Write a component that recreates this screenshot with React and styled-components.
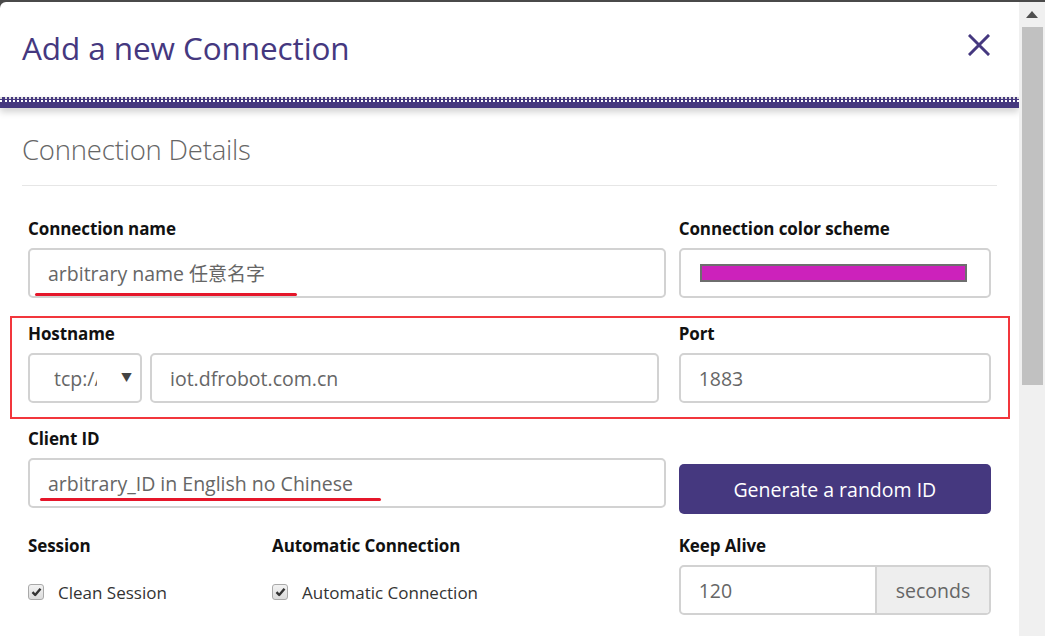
import React from "react";
import styled, { createGlobalStyle } from "styled-components";

const PURPLE = "#45387f";

const Global = createGlobalStyle`
  html, body { margin: 0; padding: 0; }
  body {
    background: #4a4a4a;
    font-family: "Open Sans", "Noto Sans", "Noto Sans CJK SC", sans-serif;
    overflow: hidden;
  }
`;

const Page = styled.div`
  position: relative;
  display: flex;
  height: 634px;
  margin-top: 2px;
  overflow: hidden;
`;

const Modal = styled.div`
  flex: 1;
  background: #fff;
  border-top-left-radius: 6px;
  overflow: hidden;
`;

const Header = styled.div`
  height: 95px;
  display: flex;
  align-items: center;
  justify-content: space-between;
  padding: 0 29px 0 22px;
`;

const Title = styled.h1`
  margin: -4px 0 0;
  font-size: 31.5px;
  font-weight: 400;
  color: ${PURPLE};
  letter-spacing: -0.1px;
`;

const Close = styled.button`
  border: 0;
  background: none;
  padding: 0;
  width: 22px;
  height: 22px;
  margin-top: -10px;
  display: flex;
  cursor: pointer;
`;

const HeaderRule = styled.div`
  position: relative;
  border-top: 2px dotted #dcdcdc;
  height: 9px;
  background: ${PURPLE};
  box-shadow: 0 4px 7px rgba(0, 0, 0, 0.18);
  &::before {
    content: "";
    position: absolute;
    left: 0;
    right: 0;
    top: 1px;
    border-top: 2px dotted #fff;
  }
`;

const Body = styled.div`
  padding: 0 22px;
`;

const SectionTitle = styled.h2`
  margin: 0;
  padding: 23px 0 0;
  font-size: 27.5px;
  font-weight: 300;
  color: #666;
  line-height: 38px;
  letter-spacing: -0.2px;
`;

const Rule = styled.hr`
  border: 0;
  border-top: 1px solid #e6e6e6;
  margin: 16px 0 0;
`;

const Grid = styled.div`
  display: grid;
  grid-template-columns: repeat(12, 1fr);
  column-gap: 13px;
  row-gap: 25px;
  padding: 32px 6px 0 6px;
`;

const Cell = styled.div`
  grid-column: span ${(p) => p.$span};
  display: flex;
  flex-direction: column;
  min-width: 0;
  margin-top: ${(p) => p.$shift || 0}px;
`;

const Label = styled.label`
  font-weight: 700;
  font-size: 17px;
  line-height: 22px;
  color: #111;
  margin-bottom: 8px;
  letter-spacing: -0.1px;
`;

const Field = styled.div`
  height: 50px;
  box-sizing: border-box;
  border: 2px solid #d2d2d2;
  border-radius: 5px;
  background: #fff;
  display: flex;
  align-items: center;
  padding: 0 18px;
  font-size: 19.5px;
  color: #666;
  white-space: nowrap;
  overflow: hidden;
  flex: ${(p) => (p.$grow ? 1 : "none")};
`;

const Cjk = styled.span`
  font-size: 19px;
`;

const ColorField = styled(Field)`
  padding: 0 22px 0 19px;
`;

const ColorBar = styled.div`
  flex: 1;
  height: 18px;
  background: #cc22bb;
  border: 2px solid #6e6e6e;
  box-sizing: border-box;
`;

const InlineGroup = styled.div`
  display: flex;
  gap: 8px;
  padding-right: 7px;
`;

const SelectBox = styled(Field)`
  width: 114px;
  padding: 0 0 0 24px;
  justify-content: space-between;
`;

const SelectText = styled.span`
  width: 43px;
  overflow: hidden;
`;

const Caret = styled.span`
  font-size: 11px;
  color: #444;
  margin-right: 8px;
  margin-top: -2px;
`;

const PrimaryButton = styled.button`
  height: 50px;
  margin: 36px 0 -6px;
  border: 0;
  border-radius: 5px;
  background: ${PURPLE};
  color: #fff;
  font-family: inherit;
  font-size: 19.5px;
  cursor: pointer;
`;

const CheckRow = styled.div`
  height: 50px;
  display: flex;
  align-items: center;
  padding-top: 4px;
  box-sizing: border-box;
  gap: 14px;
  font-size: 17px;
  color: #333;
`;

const CheckBox = styled.span`
  width: 16px;
  height: 16px;
  box-sizing: border-box;
  border: 1px solid #a9a9a9;
  border-radius: 3px;
  background: linear-gradient(#f2f2f2, #dcdcdc);
  display: flex;
  align-items: center;
  justify-content: center;
`;

const InputGroup = styled.div`
  display: flex;
  height: 50px;
  box-sizing: border-box;
  border: 2px solid #d2d2d2;
  border-radius: 5px;
  overflow: hidden;
`;

const GroupInput = styled.div`
  flex: 1;
  display: flex;
  align-items: center;
  padding: 0 18px;
  font-size: 19.5px;
  color: #666;
`;

const Addon = styled.div`
  width: 112px;
  border-left: 2px solid #d2d2d2;
  background: #eee;
  display: flex;
  align-items: center;
  justify-content: center;
  font-size: 19.5px;
  color: #666;
`;

const Scrollbar = styled.div`
  width: 26px;
  background: #f0f0f0;
  display: flex;
  flex-direction: column;
  align-items: center;
`;

const ScrollArrow = styled.div`
  height: 25px;
  display: flex;
  align-items: center;
  justify-content: center;
`;

const Thumb = styled.div`
  width: 21px;
  height: 358px;
  background: #c1c1c1;
`;

const Highlight = styled.div`
  position: absolute;
  left: 10px;
  top: 314px;
  width: 1000px;
  height: 103px;
  box-sizing: border-box;
  border: 2px solid #f2363c;
  pointer-events: none;
`;

const Underline = styled.div`
  position: absolute;
  height: 3px;
  border-radius: 2px;
  background: #e5162a;
  pointer-events: none;
`;

function Check({ children }) {
  return (
    <CheckRow>
      <CheckBox>
        <svg width="11" height="10" viewBox="0 0 11 10">
          <path d="M1.5 5.2 L4.2 8 L9.5 1.8" fill="none" stroke="#333" strokeWidth="2.4" strokeLinejoin="round" />
        </svg>
      </CheckBox>
      {children}
    </CheckRow>
  );
}

export default function App() {
  return (
    <>
      <Global />
      <Page>
        <Modal>
          <Header>
            <Title>Add a new Connection</Title>
            <Close aria-label="close">
              <svg width="22" height="22" viewBox="0 0 22 22">
                <path d="M2 2 L20 20 M20 2 L2 20" stroke={PURPLE} strokeWidth="3" strokeLinecap="square" />
              </svg>
            </Close>
          </Header>
          <HeaderRule />
          <Body>
            <SectionTitle>Connection Details</SectionTitle>
            <Rule />
            <Grid>
              <Cell $span={8}>
                <Label>Connection name</Label>
                <Field>
                  <span>
                    {"arbitrary name "}
                    <Cjk>任意名字</Cjk>
                  </span>
                </Field>
              </Cell>
              <Cell $span={4}>
                <Label>Connection color scheme</Label>
                <ColorField>
                  <ColorBar />
                </ColorField>
              </Cell>

              <Cell $span={8}>
                <Label>Hostname</Label>
                <InlineGroup>
                  <SelectBox>
                    <SelectText>tcp://</SelectText>
                    <Caret>▼</Caret>
                  </SelectBox>
                  <Field $grow>iot.dfrobot.com.cn</Field>
                </InlineGroup>
              </Cell>
              <Cell $span={4}>
                <Label>Port</Label>
                <Field>1883</Field>
              </Cell>

              <Cell $span={8}>
                <Label>Client ID</Label>
                <Field>arbitrary_ID in English no Chinese</Field>
              </Cell>
              <Cell $span={4}>
                <PrimaryButton>Generate a random ID</PrimaryButton>
              </Cell>

              <Cell $span={3} $shift={2}>
                <Label>Session</Label>
                <Check>Clean Session</Check>
              </Cell>
              <Cell $span={5} $shift={2}>
                <Label>Automatic Connection</Label>
                <Check>Automatic Connection</Check>
              </Cell>
              <Cell $span={4} $shift={2}>
                <Label>Keep Alive</Label>
                <InputGroup>
                  <GroupInput>120</GroupInput>
                  <Addon>seconds</Addon>
                </InputGroup>
              </Cell>
            </Grid>
          </Body>
        </Modal>
        <Scrollbar>
          <ScrollArrow>
            <svg width="12" height="7" viewBox="0 0 12 7">
              <path d="M0 7 L6 0 L12 7 Z" fill="#505050" />
            </svg>
          </ScrollArrow>
          <Thumb />
        </Scrollbar>
        <Highlight />
        <Underline style={{ left: 35, top: 291, width: 262 }} />
        <Underline style={{ left: 40, top: 496, width: 341 }} />
      </Page>
    </>
  );
}
